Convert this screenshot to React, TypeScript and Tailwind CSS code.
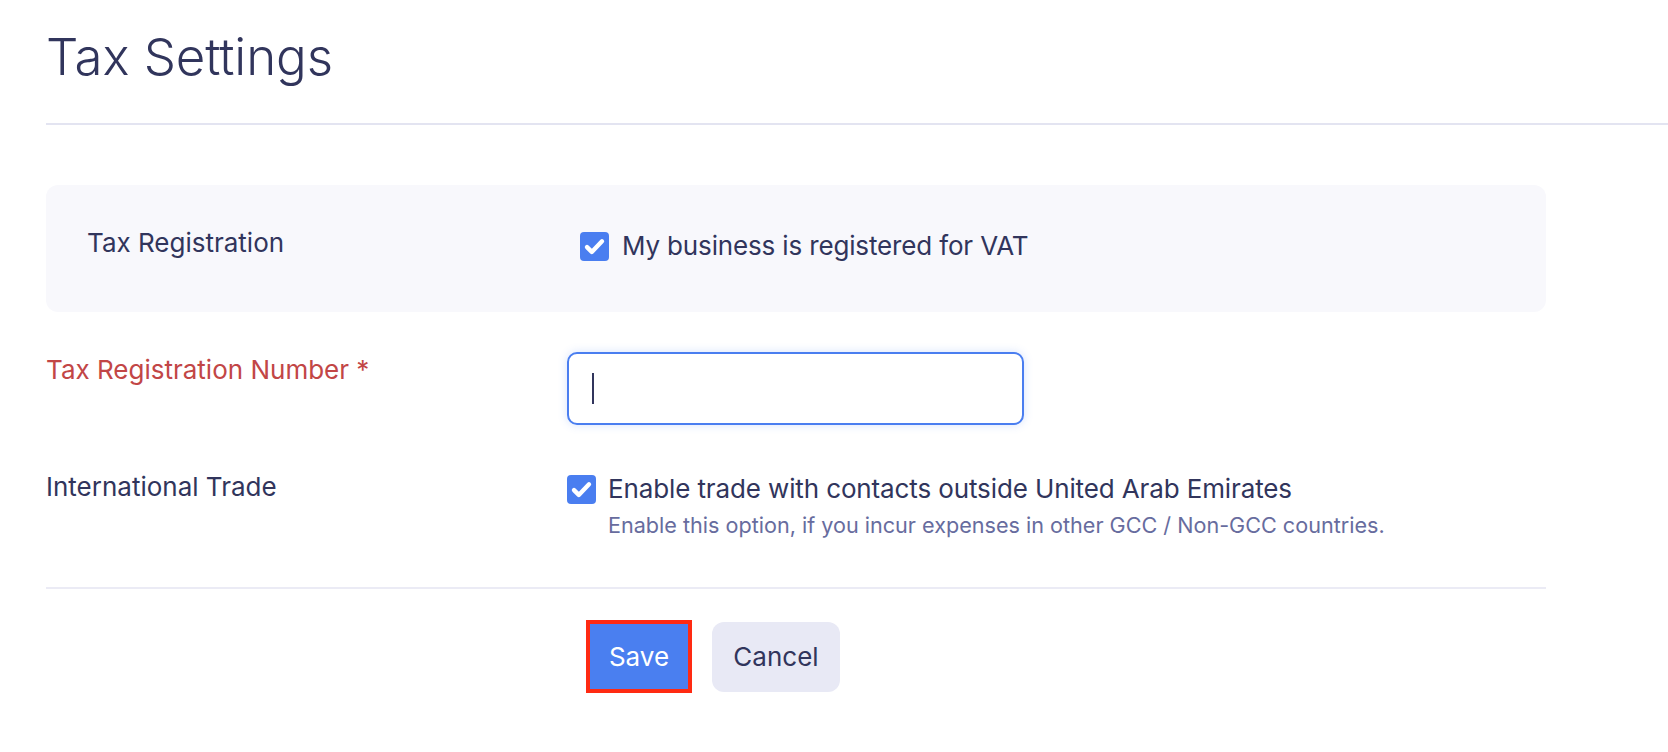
import React from "react";

function CheckBox() {
  return (
    <span className="flex h-[29px] w-[29px] shrink-0 items-center justify-center rounded-[4px] bg-[#4a7ef0]">
      <svg className="h-[25px] w-[25px]" viewBox="0 0 24 24" fill="none" stroke="white" strokeWidth={4.2} strokeLinecap="round" strokeLinejoin="round">
        <path d="M4.8 12.6l4.6 4.6L19.2 7" />
      </svg>
    </span>
  );
}

export default function App() {
  return (
    <div className="min-h-screen bg-white font-[Inter,sans-serif] text-[#31355c]">
      <div className="pl-[46px]">
        <h1 className="pt-[26px] text-[51px] leading-[61px] font-light tracking-[-0.1px]">Tax Settings</h1>
        <div className="mt-[36px] h-[2px] bg-[#e3e4f1]" />

        <div className="mt-[60px] w-[1500px]">
          <div className="flex h-[127px] rounded-[12px] bg-[#f8f8fc] pl-[41px] pt-[43px]">
            <div className="w-[493px] text-[26px] leading-[30px]">Tax Registration</div>
            <label className="mt-[3px] flex h-[30px] items-center gap-[13px]">
              <CheckBox />
              <span className="text-[26px] leading-[30px] tracking-[-0.15px]">My business is registered for VAT</span>
            </label>
          </div>

          <div className="mt-[40px] flex items-start">
            <div className="w-[521px] pt-[3px] text-[26px] leading-[30px] text-[#c24646]">
              Tax Registration Number *
            </div>
            <div className="flex h-[73px] w-[457px] items-center rounded-[10px] border-2 border-[#4a7ef0] bg-white pl-[23px] shadow-[0_0_10px_rgba(74,126,240,0.22)]">
              <span className="h-[31px] w-[2px] bg-[#31355c]" />
            </div>
          </div>

          <div className="mt-[47px] flex items-start">
            <div className="w-[521px] text-[26px] leading-[30px]">International Trade</div>
            <div className="pt-[2px]">
              <label className="flex h-[30px] items-center gap-[12px]">
                <CheckBox />
                <span className="text-[26px] leading-[30px] tracking-[-0.12px]">Enable trade with contacts outside United Arab Emirates</span>
              </label>
              <p className="ml-[41px] mt-[6px] text-[21.6px] leading-[30px] text-[#676c9e]">
                Enable this option, if you incur expenses in other GCC / Non-GCC countries.
              </p>
            </div>
          </div>

          <div className="mt-[47px] h-[2px] bg-[#ebebf5]" />

          <div className="ml-[540px] mt-[31px] flex items-center gap-[20px]">
            <button className="h-[73px] w-[106px] border-4 border-[#ff2a12] bg-[#4a7ff0] text-[26px] text-white">
              Save
            </button>
            <button className="h-[70px] w-[128px] rounded-[12px] bg-[#e8e9f5] text-[26px] text-[#31355c]">
              Cancel
            </button>
          </div>
        </div>
      </div>
    </div>
  );
}
